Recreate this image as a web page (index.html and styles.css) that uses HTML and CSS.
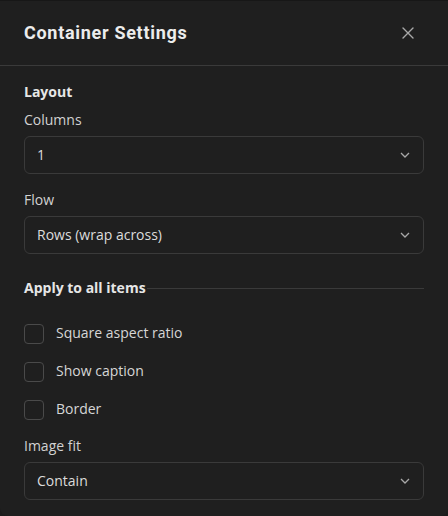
FILE: index.html
```html
<!DOCTYPE html>
<html>
<head>
<meta charset="utf-8">
<link rel="stylesheet" href="styles.css">
</head>
<body>
<div class="panel">
  <div class="header">
    <h1 class="title">Container Settings</h1>
    <button class="close" aria-label="Close">
      <svg width="12" height="12" viewBox="0 0 12 12"><path d="M1 1L11 11M11 1L1 11" stroke="#a8a8a8" stroke-width="1.4" fill="none" stroke-linecap="round"/></svg>
    </button>
  </div>
  <div class="content">
    <div class="section-title">Layout</div>
    <div class="field first">
      <div class="label">Columns</div>
      <div class="select"><span>1</span><svg class="chev" width="10" height="6" viewBox="0 0 10 6"><path d="M1 1L5 5L9 1" stroke="#a8a8a8" stroke-width="1.3" fill="none"/></svg></div>
    </div>
    <div class="field">
      <div class="label">Flow</div>
      <div class="select"><span>Rows (wrap across)</span><svg class="chev" width="10" height="6" viewBox="0 0 10 6"><path d="M1 1L5 5L9 1" stroke="#a8a8a8" stroke-width="1.3" fill="none"/></svg></div>
    </div>
    <div class="divider-title"><span>Apply to all items</span><div class="rule"></div></div>
    <div class="checks">
      <label class="check"><span class="box"></span><span>Square aspect ratio</span></label>
      <label class="check"><span class="box"></span><span>Show caption</span></label>
      <label class="check"><span class="box"></span><span>Border</span></label>
    </div>
    <div class="field">
      <div class="label">Image fit</div>
      <div class="select"><span>Contain</span><svg class="chev" width="10" height="6" viewBox="0 0 10 6"><path d="M1 1L5 5L9 1" stroke="#a8a8a8" stroke-width="1.3" fill="none"/></svg></div>
    </div>
  </div>
</div>
</body>
</html>
```
FILE: styles.css
```css
* { box-sizing: border-box; }
html, body { margin: 0; padding: 0; background: #1c1c1c; }
body { font-family: "Open Sans", "Noto Sans", sans-serif; color: #d6d6d6; }
.panel {
  width: 448px;
  height: 516px;
  background: #1f1f1f;
  border-top: 1px solid #171717;
  border-radius: 0 0 8px 8px;
  overflow: hidden;
}
.header {
  height: 65px;
  display: flex;
  align-items: center;
  justify-content: space-between;
  padding: 0 24px;
  border-bottom: 1px solid #3a3a3a;
}
.title {
  margin: 0;
  font-family: Roboto, "Liberation Sans", sans-serif;
  font-weight: 700;
  font-size: 18px;
  letter-spacing: 0.7px;
  color: #ececec;
  line-height: 24px;
}
.close {
  background: none;
  border: 0;
  padding: 0;
  width: 16px;
  height: 16px;
  display: flex;
  align-items: center;
  justify-content: center;
  margin-right: 8px;
}
.content {
  padding: 16px 24px 0;
  display: flex;
  flex-direction: column;
}
.section-title {
  font-weight: 700;
  font-size: 14px;
  line-height: 20px;
  color: #e6e6e6;
}
.field { display: flex; flex-direction: column; gap: 6px; margin-top: 16px; }
.field.first { margin-top: 8px; }
.label { font-size: 14px; line-height: 20px; color: #d2d2d2; }
.select {
  height: 38px;
  border: 1px solid #3a3a3a;
  border-radius: 6px;
  display: flex;
  align-items: center;
  justify-content: space-between;
  padding: 0 13px 0 12px;
  font-size: 14px;
  color: #dcdcdc;
  background: #1f1f1f;
}
.select span { position: relative; top: -1px; }
.chev { display: block; }
.divider-title {
  margin-top: 24px;
  display: flex;
  align-items: center;
  font-weight: 700;
  font-size: 14px;
  line-height: 20px;
  color: #e6e6e6;
}
.rule { flex: 1; height: 1px; background: #3a3a3a; margin-left: 1px; }
.checks { margin-top: 26px; display: flex; flex-direction: column; gap: 18px; }
.check {
  display: flex;
  align-items: center;
  gap: 12px;
  height: 20px;
  font-size: 14px;
  color: #d6d6d6;
}
.check span:last-child { position: relative; top: -2px; }
.box {
  width: 20px;
  height: 20px;
  border: 1px solid #4a4a4a;
  border-radius: 4px;
  flex: none;
}
```
